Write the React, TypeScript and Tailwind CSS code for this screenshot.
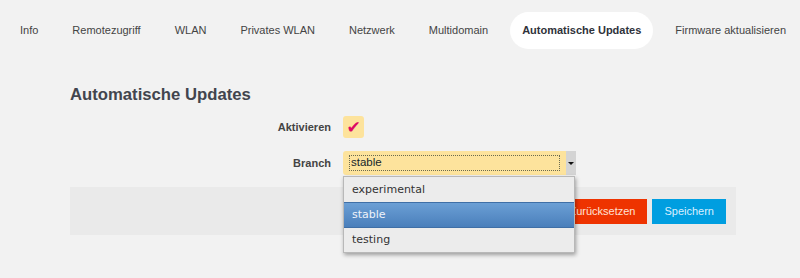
import React from "react";

const tabs = [
  "Info",
  "Remotezugriff",
  "WLAN",
  "Privates WLAN",
  "Netzwerk",
  "Multidomain",
  "Automatische Updates",
  "Firmware aktualisieren",
];

export default function App() {
  return (
    <div
      className="w-[800px] h-[278px] bg-[#f2f2f2] overflow-hidden text-[#3f3f3f]"
      style={{ fontFamily: '"Liberation Sans", Arial, sans-serif' }}
    >
      <nav className="flex items-center gap-[10px] pl-[8px] pt-[12px] whitespace-nowrap">
        {tabs.map((t) => (
          <div
            key={t}
            className={
              t === "Automatische Updates"
                ? "h-[37px] flex items-center px-[12px] rounded-full bg-white text-[11px] font-bold text-[#2f323a]"
                : "h-[37px] flex items-center px-[12px] text-[11px] text-[#444]"
            }
          >
            {t}
          </div>
        ))}
      </nav>

      <div className="pl-[70px] w-[736px] pt-[36px]">
        <h2 className="text-[16.7px] leading-[20px] font-bold text-[#42454e]">
          Automatische Updates
        </h2>

        <div className="flex items-center mt-[11px] h-[22px]">
          <div className="w-[261px] text-right text-[11px] font-bold text-[#444]">
            Aktivieren
          </div>
          <div className="ml-[12px] w-[21px] h-[22px] rounded-[3px] bg-[#fde39c] flex items-center justify-center">
            <span
              className="text-[17px] leading-none text-[#dc0a64]"
              style={{ fontFamily: '"DejaVu Sans", sans-serif' }}
            >
              ✔
            </span>
          </div>
        </div>

        <div className="flex items-center mt-[13px] h-[24px]">
          <div className="w-[261px] text-right text-[11px] font-bold text-[#444]">
            Branch
          </div>
          <div className="relative ml-[12px] w-[233px] h-[24px] flex">
            <div className="flex-1 bg-[#fde39c] rounded-l-[3px] flex items-center pl-[6px] pr-[6px]">
              <div className="flex-1 h-[16px] border border-dotted border-[#6b6b50] flex items-center pl-[1px] text-[11.5px] text-[#16262a]">
                stable
              </div>
            </div>
            <div className="w-[10px] bg-[#d4d4d4] flex items-center justify-center">
              <div className="w-0 h-0 border-l-[3px] border-r-[3px] border-t-[3px] border-l-transparent border-r-transparent border-t-[#111]" />
            </div>

            <div
              className="absolute left-0 top-[25px] w-[232px] bg-[#ececec] border border-[#b8b8b8] shadow-[1px_2px_4px_rgba(0,0,0,0.35)] z-10 text-[11px]"
              style={{ fontFamily: '"DejaVu Sans", sans-serif' }}
            >
              <div className="h-[25px] flex items-center pl-[8px] pt-[1px] text-[#333]">
                experimental
              </div>
              <div className="h-[26px] flex items-center pl-[8px] text-[#eef3fa] bg-gradient-to-b from-[#6b9fd5] to-[#4a7fbb] border-y border-[#3f6fa6]">
                stable
              </div>
              <div className="h-[24px] flex items-center pl-[8px] pt-[1px] text-[#333]">
                testing
              </div>
            </div>
          </div>
        </div>

        <div className="mt-[12px] h-[48px] bg-[#eaeaea] flex items-center justify-end gap-[5px] pr-[10px]">
          <button className="h-[25px] px-[12px] bg-[#ee3300] text-[#ffe2d6] text-[11px]">
            Zurücksetzen
          </button>
          <button className="h-[25px] px-[12px] bg-[#009ee0] text-[#dbefff] text-[11px]">
            Speichern
          </button>
        </div>
      </div>
    </div>
  );
}
